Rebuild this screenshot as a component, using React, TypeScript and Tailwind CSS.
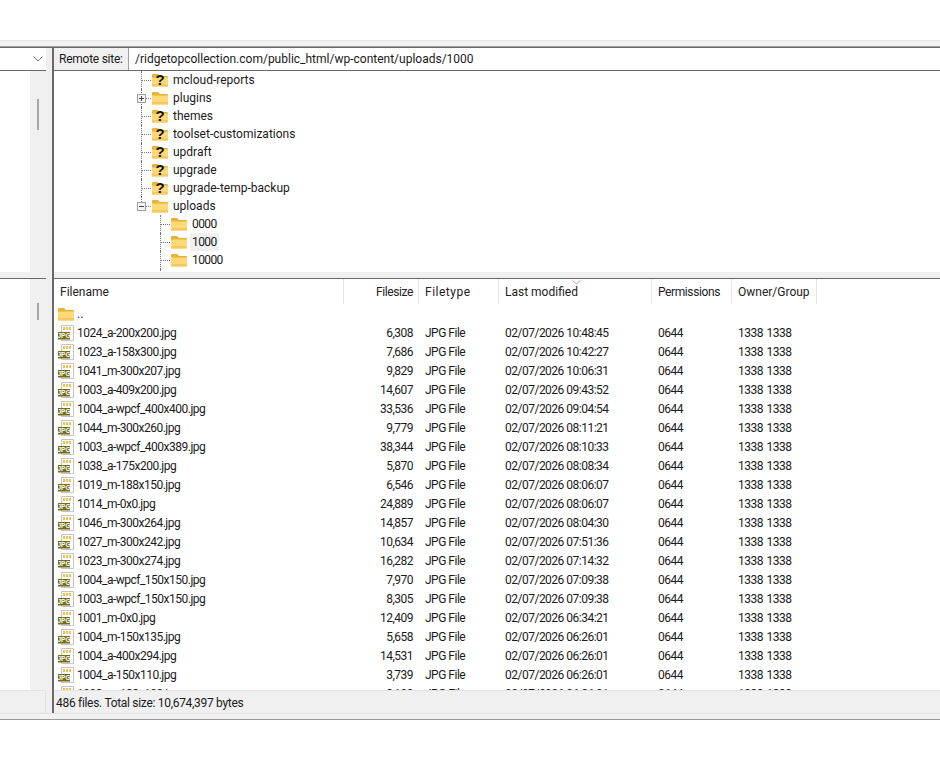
import React from "react";

const files = [
  ["1024_a-200x200.jpg", "6,308", "02/07/2026 10:48:45"],
  ["1023_a-158x300.jpg", "7,686", "02/07/2026 10:42:27"],
  ["1041_m-300x207.jpg", "9,829", "02/07/2026 10:06:31"],
  ["1003_a-409x200.jpg", "14,607", "02/07/2026 09:43:52"],
  ["1004_a-wpcf_400x400.jpg", "33,536", "02/07/2026 09:04:54"],
  ["1044_m-300x260.jpg", "9,779", "02/07/2026 08:11:21"],
  ["1003_a-wpcf_400x389.jpg", "38,344", "02/07/2026 08:10:33"],
  ["1038_a-175x200.jpg", "5,870", "02/07/2026 08:08:34"],
  ["1019_m-188x150.jpg", "6,546", "02/07/2026 08:06:07"],
  ["1014_m-0x0.jpg", "24,889", "02/07/2026 08:06:07"],
  ["1046_m-300x264.jpg", "14,857", "02/07/2026 08:04:30"],
  ["1027_m-300x242.jpg", "10,634", "02/07/2026 07:51:36"],
  ["1023_m-300x274.jpg", "16,282", "02/07/2026 07:14:32"],
  ["1004_a-wpcf_150x150.jpg", "7,970", "02/07/2026 07:09:38"],
  ["1003_a-wpcf_150x150.jpg", "8,305", "02/07/2026 07:09:38"],
  ["1001_m-0x0.jpg", "12,409", "02/07/2026 06:34:21"],
  ["1004_m-150x135.jpg", "5,658", "02/07/2026 06:26:01"],
  ["1004_a-400x294.jpg", "14,531", "02/07/2026 06:26:01"],
  ["1004_a-150x110.jpg", "3,739", "02/07/2026 06:26:01"],
  ["1003_m-188x100.jpg", "3,100", "02/07/2026 06:26:01"],
];

const treeRows = [
  { name: "mcloud-reports", unknown: true },
  { name: "plugins", expander: "plus" },
  { name: "themes", unknown: true },
  { name: "toolset-customizations", unknown: true },
  { name: "updraft", unknown: true },
  { name: "upgrade", unknown: true },
  { name: "upgrade-temp-backup", unknown: true },
  { name: "uploads", expander: "minus", last: true },
];

const subRows = ["0000", "1000", "10000", ""];

const columns = "grid grid-cols-[290px_75px_80px_153px_80px_85px]";

function Folder({ unknown }: { unknown?: boolean }) {
  return (
    <svg width="16" height="14" viewBox="0 0 16 14" className="shrink-0">
      <path d="M0 2 Q0 1 1 1 H6 L8 3 H15 Q16 3 16 4 V13 H0 Z" fill="#e8b23a" />
      <path d="M0 4.5 H16 V13.5 H0 Z" fill="#fdd978" />
      <path d="M0 11 H16 V13.5 H0 Z" fill="#f6c95f" />
      {unknown && (
        <text x="8" y="12" textAnchor="middle" fontSize="15" fontWeight="700" fill="#111" letterSpacing="0" fontFamily="Liberation Sans, sans-serif">
          ?
        </text>
      )}
    </svg>
  );
}

function JpgIcon() {
  return (
    <svg width="16" height="16" viewBox="0 0 16 16" className="shrink-0">
      <path d="M3.5 0.5 H15.5 V15.5 H3.5 Z" fill="#fff" stroke="#c4c4c4" />
      <path d="M5 2 h2 v3 H5 Z M8 2 h2 v3 H8 Z M11 2 h2 v3 H11 Z" fill="#eec24c" />
      <rect x="0" y="7" width="12" height="7.5" fill="#6f6f1e" />
      <text x="6" y="13" textAnchor="middle" fontSize="6.5" fontWeight="700" fill="#fff" letterSpacing="0" fontFamily="Liberation Sans, sans-serif">
        JPG
      </text>
    </svg>
  );
}

function Expander({ kind }: { kind: string }) {
  return (
    <svg width="9" height="9" viewBox="0 0 9 9" className="absolute left-[83px] top-[5px] bg-white">
      <rect x="0.5" y="0.5" width="8" height="8" fill="#f4f4f4" stroke="#a0a0a0" />
      <path d={kind === "plus" ? "M2 4.5 H7 M4.5 2 V7" : "M2 4.5 H7"} stroke="#444" />
    </svg>
  );
}

function RemoteTree() {
  return (
    <div className="h-[201px] shrink-0 overflow-hidden bg-white">
      {treeRows.map((row) => (
        <div key={row.name} className="relative flex h-[18px] items-center pl-[87px]">
          <div className={`w-px self-start border-l border-dotted border-[#777] ${row.last ? "h-[9px]" : "h-full"}`} />
          <div className="mr-[1px] w-[9px] border-t border-dotted border-[#777]" />
          <Folder unknown={row.unknown} />
          <span className="ml-[5px]">{row.name}</span>
          {row.expander && <Expander kind={row.expander} />}
        </div>
      ))}
      {subRows.map((name) => (
        <div key={name} className="flex h-[18px] items-center pl-[106px]">
          <div className="h-full w-px border-l border-dotted border-[#777]" />
          <div className="mr-[1px] w-[9px] border-t border-dotted border-[#777]" />
          <Folder />
          <span className={`ml-[3px] px-[2px] tracking-[-0.6px] ${name === "1000" ? "bg-[#f0f0f0]" : ""}`}>{name}</span>
        </div>
      ))}
    </div>
  );
}

function FileList() {
  return (
    <div className="min-h-0 flex-1 overflow-hidden bg-white">
      <div className={`${columns} relative h-[25px] items-center text-[#222]`}>
        <div className="flex h-full items-center border-r border-[#e5e5e5] pl-[6px]">Filename</div>
        <div className="flex h-full items-center justify-end border-r border-[#e5e5e5] pr-[5px] tracking-[-0.4px]">Filesize</div>
        <div className="flex h-full items-center border-r border-[#e5e5e5] pl-[6px] tracking-[0.5px]">Filetype</div>
        <div className="flex h-full items-center border-r border-[#e5e5e5] pl-[6px]">Last modified</div>
        <div className="flex h-full items-center border-r border-[#e5e5e5] pl-[6px] tracking-[-0.4px]">Permissions</div>
        <div className="flex h-full items-center border-r border-[#e5e5e5] pl-[6px]">Owner/Group</div>
        <svg width="9" height="5" viewBox="0 0 9 5" className="absolute left-[518px] top-[1px]">
          <path d="M0.5 0.5 L4.5 4 L8.5 0.5" fill="none" stroke="#a8a8a8" />
        </svg>
      </div>
      <div className={`${columns} h-[19px] items-center`}>
        <div className="flex items-center pl-[4px]">
          <Folder />
          <span className="ml-[3px]">..</span>
        </div>
      </div>
      {files.map(([name, size, modified]) => (
        <div key={name} className={`${columns} h-[19px] items-center tracking-[-0.5px]`}>
          <div className="flex items-center pl-[4px]">
            <JpgIcon />
            <span className="ml-[3px]">{name}</span>
          </div>
          <div className="pr-[6px] text-right">{size}</div>
          <div className="pl-[6px]">JPG File</div>
          <div className="pl-[6px]">{modified}</div>
          <div className="pl-[6px]">0644</div>
          <div className="pl-[6px] [word-spacing:1px]">1338 1338</div>
        </div>
      ))}
    </div>
  );
}

function LeftPane() {
  return (
    <div className="flex w-[46px] shrink-0 flex-col">
      <div className="flex h-[22px] items-center justify-end bg-white pr-[3px]">
        <svg width="10" height="6" viewBox="0 0 10 6">
          <path d="M0.5 0.5 L5 5 L9.5 0.5" fill="none" stroke="#7a7a7a" />
        </svg>
      </div>
      <div className="h-px bg-[#696969]" />
      <div className="flex h-[201px] justify-end bg-white">
        <div className="flex w-[16px] justify-center bg-[#f0f0f0] pt-[28px]">
          <div className="h-[31px] w-[2px] bg-[#a6a6a6]" />
        </div>
      </div>
      <div className="h-[6px] bg-[#f0f0f0]" />
      <div className="h-px bg-[#696969]" />
      <div className="flex h-[411px] justify-end bg-white">
        <div className="flex w-[16px] justify-center bg-[#f0f0f0] pt-[24px]">
          <div className="h-[17px] w-[2px] bg-[#a6a6a6]" />
        </div>
      </div>
      <div className="h-[23px] border-t border-r border-[#e3e3e3] bg-[#f0f0f0]" />
    </div>
  );
}

export default function App() {
  return (
    <div
      className="flex h-[767px] w-[940px] flex-col overflow-hidden bg-white text-[12px] text-[#1a1a1a]"
      style={{ fontFamily: "Roboto, sans-serif" }}
    >
      <div className="h-[40px] shrink-0 bg-white" />
      <div className="h-px shrink-0 bg-[#e6e6e6]" />
      <div className="h-[5px] shrink-0 bg-[#f2f2f2]" />
      <div className="h-px shrink-0 bg-[#a0a0a0]" />
      <div className="h-px shrink-0 bg-[#696969]" />
      <div className="flex h-[665px] shrink-0 bg-[#f0f0f0]">
        <LeftPane />
        <div className="w-[6px] shrink-0 bg-[#f0f0f0]" />
        <div className="flex min-w-0 flex-1 flex-col border-l-2 border-[#696969]">
          <div className="flex h-[22px] shrink-0">
            <div className="flex w-[75px] items-center border-r border-[#a0a0a0] bg-[#f0f0f0] pl-[5px] tracking-[-0.25px]">Remote site:</div>
            <div className="flex flex-1 items-center bg-white pl-[6px]">/ridgetopcollection.com/public_html/wp-content/uploads/1000</div>
          </div>
          <div className="h-px shrink-0 bg-[#696969]" />
          <RemoteTree />
          <div className="h-[6px] shrink-0 bg-[#f0f0f0]" />
          <div className="h-px shrink-0 bg-[#696969]" />
          <FileList />
          <div className="flex h-[23px] shrink-0 items-center border-t border-[#e3e3e3] bg-[#f0f0f0] pl-[2px] pt-[1px] tracking-[-0.3px]">486 files. Total size: 10,674,397 bytes</div>
        </div>
      </div>
      <div className="h-[6px] shrink-0 border-t border-[#e3e3e3] bg-[#f2f2f2]" />
      <div className="h-px shrink-0 bg-[#999999]" />
    </div>
  );
}
